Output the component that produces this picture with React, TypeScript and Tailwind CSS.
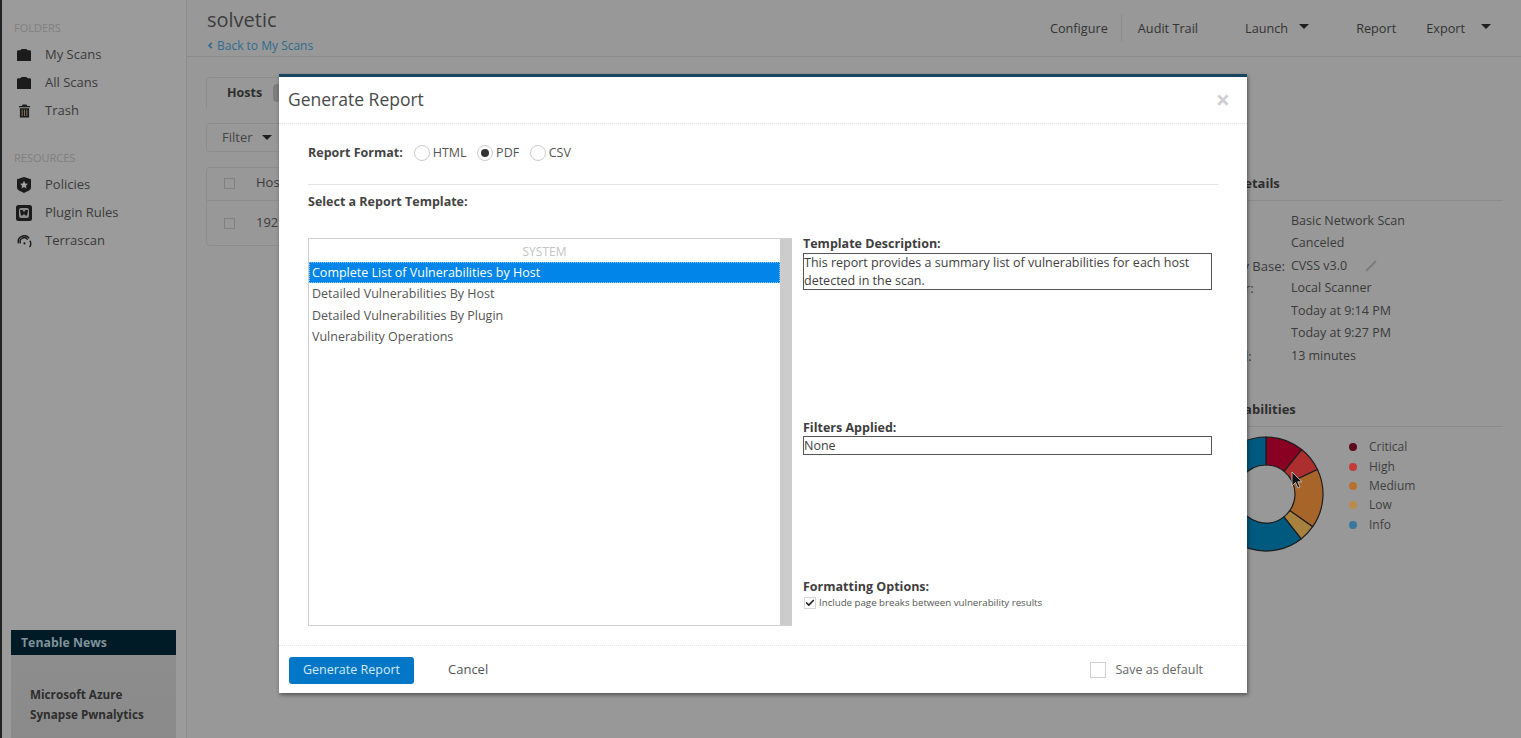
import { Check } from 'lucide-react'

const font = { fontFamily: '"Open Sans", sans-serif' }

const Folder = () => (
  <svg viewBox="0 0 14 12" className="h-[12px] w-[14px]" fill="#1b1b1b">
    <path d="M0 2 L1 1.2 H3.5 L4.5 0 H9.5 L10.5 1.2 H13 L14 2 V12 H0 Z" />
  </svg>
)

const Trash = () => (
  <svg viewBox="0 0 12 14" className="h-[14px] w-[11px]">
    <path fill="#1b1b1b" d="M4 0 H8 L9 1.5 H12 V3 H0 V1.5 H3 Z M1 4 H11 V14 H1 Z" />
    <path stroke="#8a7a62" strokeWidth="1" d="M3.5 5.5 V12.5 M6 5.5 V12.5 M8.5 5.5 V12.5" />
  </svg>
)

const Shield = () => (
  <svg viewBox="0 0 14 16" className="h-[16px] w-[14px]">
    <path fill="#1b1b1b" d="M7 0 L14 2.2 V10.5 Q14 12.5 12 13.5 L7 16 L2 13.5 Q0 12.5 0 10.5 V2.2 Z" />
    <path fill="#a5a5a5" d="M7 3.8 L8.2 6.5 L11 6.8 L8.9 8.7 L9.5 11.5 L7 10 L4.5 11.5 L5.1 8.7 L3 6.8 L5.8 6.5 Z" />
  </svg>
)

const PluginRules = () => (
  <svg viewBox="0 0 16 16" className="h-[16px] w-[16px]">
    <rect width="16" height="16" rx="2.5" fill="#1b1b1b" />
    <rect x="3" y="3" width="10" height="10" rx="2" fill="#8c8c8c" />
    <path fill="#1b1b1b" d="M4 5 H6.3 L8 7 L9.7 5 H12 L11 10.5 H9.6 L8 9 L6.4 10.5 H5 Z" />
  </svg>
)

const Terrascan = () => (
  <svg viewBox="0 0 16 14" className="h-[13px] w-[15px]" fill="none" stroke="#1b1b1b">
    <path strokeWidth="1.5" d="M1.5 9 A6.5 6.5 0 0 1 13 3.5" />
    <path strokeWidth="1.5" d="M3.7 9 A4.3 4.3 0 0 1 11.3 5" />
    <path strokeWidth="1.5" d="M13.8 6 A6.5 6.5 0 0 1 13.5 13" />
    <circle cx="8" cy="9" r="1.2" fill="#1b1b1b" stroke="none" />
  </svg>
)

const Caret = ({ className = '' }: { className?: string }) => (
  <span className={`inline-block h-0 w-0 border-x-[5px] border-t-[5px] border-x-transparent border-t-[#1f1f1f] ${className}`} />
)

function SideItem({ icon, label }: { icon: React.ReactNode; label: string }) {
  return (
    <div className="flex h-[28px] items-center text-[13px] text-[#3a3a3a]">
      <span className="flex w-[20px] justify-center">{icon}</span>
      <span className="ml-[11px]">{label}</span>
    </div>
  )
}

function Sidebar() {
  return (
    <aside className="flex h-full w-[187px] shrink-0 flex-col border-r border-l-2 border-r-[#8c8c8c] border-l-[#222] bg-[#9b9b9b]">
      <div className="pl-[12px] pt-[20px]">
        <div className="mb-[6px] h-[15px] text-[11px] leading-[15px] text-[#808080]">FOLDERS</div>
        <SideItem icon={<Folder />} label="My Scans" />
        <SideItem icon={<Folder />} label="All Scans" />
        <SideItem icon={<Trash />} label="Trash" />
        <div className="mb-[6px] mt-[25px] h-[15px] text-[11px] leading-[15px] text-[#808080]">RESOURCES</div>
        <SideItem icon={<Shield />} label="Policies" />
        <SideItem icon={<PluginRules />} label="Plugin Rules" />
        <SideItem icon={<Terrascan />} label="Terrascan" />
      </div>
      <div className="mx-[9px] mt-auto h-[108px] w-[165px] bg-gradient-to-b from-[#8e8e8e] to-[#8a8a8a]">
        <div className="flex h-[25px] items-center bg-[#001a26] pl-[10px] pt-[1px] text-[12.3px] font-bold text-[#7f9299]">Tenable News</div>
        <div className="pl-[19px] pt-[29px] text-[11.7px] font-bold leading-[20px] text-[#2e2e2e]">
          <div>Microsoft Azure</div>
          <div>Synapse Pwnalytics</div>
        </div>
      </div>
    </aside>
  )
}

function TopBar() {
  return (
    <header className="flex h-[57px] items-stretch justify-between border-b border-[#8a8a8a] pl-[20px]">
      <div className="pt-[6px]">
        <div className="text-[20px] leading-[27px] text-[#3d3d3d]">solvetic</div>
        <div className="mt-[4px] flex items-center text-[12px] leading-[17px] text-[#2f6b8e]">
          <svg viewBox="0 0 6 8" className="mr-[4px] h-[7px] w-[6px]" fill="none" stroke="#2f6b8e" strokeWidth="2">
            <path d="M5 1 L2 4 L5 7" />
          </svg>
          Back to My Scans
        </div>
      </div>
      <nav className="flex pt-[14px] text-[12.7px] leading-[28px] text-[#333]">
        <span className="h-[28px] border-r border-[#8c8c8c] pr-[13px]">Configure</span>
        <span className="ml-[16px]">Audit Trail</span>
        <span className="ml-[47px]">Launch</span>
        <Caret className="ml-[11px] mt-[10px]" />
        <span className="ml-[47px]">Report</span>
        <span className="ml-[30px]">Export</span>
        <Caret className="ml-[16px] mr-[30px] mt-[10px]" />
      </nav>
    </header>
  )
}

function Behind() {
  return (
    <div className="min-w-0 flex-1 pr-[20px] text-[13px] text-[#3a3a3a]">
      <div className="flex h-[31px] items-end">
        <div className="flex h-[31px] w-[100px] items-center rounded-t border-x border-t border-[#8c8c8c] pl-[20px] text-[12.5px] font-bold text-[#2e2e2e]">
          Hosts
          <span className="ml-[11px] h-[18px] w-[12px] rounded-sm bg-[#7e7e7e]" />
        </div>
      </div>
      <div className="mt-[15px] flex h-[29px] w-[110px] items-center rounded-sm border border-[#8c8c8c] pl-[15px] text-[#444]">
        Filter <Caret className="ml-[9px]" />
      </div>
      <div className="mt-[15px] rounded-sm border border-[#8c8c8c]">
        <div className="flex h-[33px] items-center border-b border-[#8c8c8c] pb-[2px] pl-[17px]">
          <span className="h-[11px] w-[11px] border border-[#828282]" />
          <span className="ml-[21px]">Host</span>
        </div>
        <div className="flex h-[44px] items-center pl-[17px]">
          <span className="h-[11px] w-[11px] border border-[#828282]" />
          <span className="ml-[21px]">192.168.0.1</span>
        </div>
      </div>
    </div>
  )
}

const details = [
  ['Policy:', 'Basic Network Scan'],
  ['Status:', 'Canceled'],
  ['Severity Base:', 'CVSS v3.0'],
  ['Scanner:', 'Local Scanner'],
  ['Start:', 'Today at 9:14 PM'],
  ['End:', 'Today at 9:27 PM'],
  ['Elapsed:', '13 minutes'],
]

const severities = [
  { label: 'Critical', dot: '#5c0a1c' },
  { label: 'High', dot: '#c23a3a' },
  { label: 'Medium', dot: '#b9702f' },
  { label: 'Low', dot: '#b98c4a' },
  { label: 'Info', dot: '#3a779c' },
]

const slices = [
  { from: 0, to: 38.7, color: '#8a0022' },
  { from: 38.7, to: 64.5, color: '#ad2e2e' },
  { from: 64.5, to: 125, color: '#a8652a' },
  { from: 125, to: 142, color: '#a8813f' },
  { from: 142, to: 360, color: '#00597f' },
]

function slicePath(from: number, to: number, outer: number, inner: number) {
  const pt = (a: number, r: number) => {
    const t = (a * Math.PI) / 180
    return `${(60 + r * Math.sin(t)).toFixed(2)} ${(60 - r * Math.cos(t)).toFixed(2)}`
  }
  const large = to - from > 180 ? 1 : 0
  return `M${pt(from, outer)} A${outer} ${outer} 0 ${large} 1 ${pt(to, outer)} L${pt(to, inner)} A${inner} ${inner} 0 ${large} 0 ${pt(from, inner)} Z`
}

function Donut() {
  return (
    <svg viewBox="0 0 120 120" className="h-[120px] w-[120px]">
      {slices.map((s) => (
        <path key={s.from} d={slicePath(s.from, s.to, 57, 29)} fill={s.color} stroke="#1d1d1d" strokeWidth="1.2" />
      ))}
    </svg>
  )
}

function ScanDetails() {
  return (
    <div className="w-[302px] shrink-0 text-[12.5px] text-[#3a3a3a]">
      <div className="mt-[97px] flex h-[27px] items-start border-b border-[#8a8a8a] text-[13px] font-bold leading-[18px] text-[#2e2e2e]">Scan Details</div>
      <div className="mt-[9px]">
        {details.map(([k, v]) => (
          <div key={k} className="flex h-[22.5px] items-center">
            <span className="w-[90px] whitespace-nowrap text-[13px]">{k}</span>
            <span>{v}</span>
            {k === 'Severity Base:' && (
              <svg viewBox="0 0 12 12" className="ml-[18px] h-[12px] w-[12px]" stroke="#7c7c7c" strokeWidth="2">
                <path d="M1 11 L11 1" />
              </svg>
            )}
          </div>
        ))}
      </div>
      <div className="mt-[32px] flex h-[27px] items-start border-b border-[#8a8a8a] text-[13px] font-bold leading-[18px] text-[#2e2e2e]">Vulnerabilities</div>
      <div className="relative mt-[8px] flex">
        <div className="ml-[5px] mt-[-1px]">
          <Donut />
        </div>
        <div className="ml-[23px] mt-[3px]">
          {severities.map((s) => (
            <div key={s.label} className="flex h-[19.4px] items-center text-[12px] text-[#3f3f3f]">
              <span className="mr-[12px] h-[8px] w-[8px] rounded-full" style={{ backgroundColor: s.dot }} />
              {s.label}
            </div>
          ))}
        </div>
      </div>
    </div>
  )
}

function Radio({ label, checked }: { label: string; checked?: boolean }) {
  return (
    <label className="flex items-center text-[12.5px] text-[#555]">
      <span className="flex h-[16px] w-[16px] items-center justify-center rounded-full border border-[#ccc] bg-white">
        {checked && <span className="h-[8px] w-[8px] rounded-full bg-[#333]" />}
      </span>
      <span className="ml-[3px]">{label}</span>
    </label>
  )
}

const templates = ['Detailed Vulnerabilities By Host', 'Detailed Vulnerabilities By Plugin', 'Vulnerability Operations']

function GenerateReportModal() {
  return (
    <div className="absolute left-[279px] top-[74px] flex h-[619px] w-[968px] flex-col border-t-[3px] border-[#1a4560] bg-white shadow-[1px_2px_4px_rgba(0,0,0,0.45)]">
      <div className="flex h-[47px] shrink-0 items-center justify-between border-b border-dotted border-[#e4e4e4] pb-[2px] pl-[9px] pr-[17px]">
        <span className="text-[17.5px] text-[#4a4a4a]">Generate Report</span>
        <span className="text-[25px] font-bold leading-none text-[#cfcfcf]">×</span>
      </div>
      <div className="flex min-h-0 flex-1 flex-col pl-[29px] pr-[29px]">
        <div className="flex h-[61px] shrink-0 items-center gap-[10.5px] border-b border-[#e3e3e3] pb-[2px]">
          <span className="mr-[0.5px] text-[12.5px] font-bold text-[#444]">Report Format:</span>
          <Radio label="HTML" />
          <Radio checked label="PDF" />
          <Radio label="CSV" />
        </div>
        <div className="mt-[8px] h-[17px] text-[12.5px] font-bold leading-[17px] text-[#444]">Select a Report Template:</div>
        <div className="mt-[28px] flex h-[388px] gap-[11px]">
          <div className="flex w-[484px] shrink-0 border border-r-0 border-[#cfcfcf]">
            <div className="min-w-0 flex-1 text-[12.5px] text-[#555]">
              <div className="flex h-[23px] items-center justify-center pt-[2px] text-[12px] text-[#c4c4c4]">SYSTEM</div>
              <div className="flex h-[21px] items-center border border-dotted border-[#8ec8f5] bg-[#0285e8] pl-[2px] pt-[1px] text-white">Complete List of Vulnerabilities by Host</div>
              <div className="h-[1px]" />
              {templates.map((t) => (
                <div key={t} className="flex h-[21.3px] items-center pl-[3px]">{t}</div>
              ))}
            </div>
            <div className="w-[12px] shrink-0 bg-[#cccccc]" />
          </div>
          <div className="w-[409px] shrink-0 text-[12.5px] text-[#3e3e3e]">
            <div className="h-[15px] font-bold leading-[11px]">Template Description:</div>
            <div className="h-[37px] border border-[#555] leading-[18px]">
              This report provides a summary list of vulnerabilities for each host detected in the scan.
            </div>
            <div className="mt-[130px] h-[16px] font-bold leading-[15px]">Filters Applied:</div>
            <div className="h-[19px] border border-[#555] leading-[17px]">None</div>
            <div className="mt-[124px] h-[15px] font-bold leading-[15px]">Formatting Options:</div>
            <div className="mt-[2px] flex items-center text-[9.7px] text-[#555]">
              <span className="ml-[1px] flex h-[12px] w-[12px] items-center justify-center border border-[#d6d6d6]">
                <Check className="h-[10px] w-[10px] text-[#222]" strokeWidth={4} />
              </span>
              <span className="ml-[3px]">Include page breaks between vulnerability results</span>
            </div>
          </div>
        </div>
      </div>
      <div className="flex h-[48px] shrink-0 items-center justify-between border-t border-dotted border-[#e6e6e6] pl-[10px] pr-[44px] pt-[1px] text-[12.5px] text-[#666]">
        <div className="flex items-center">
          <button className="h-[27px] w-[125px] rounded-[3px] bg-[#0277c8] text-[12.5px] text-[#d5e9f7]">Generate Report</button>
          <span className="ml-[34px] text-[13px] text-[#555]">Cancel</span>
        </div>
        <label className="flex items-center">
          <span className="h-[16px] w-[16px] border border-[#d0d0d0]" />
          <span className="ml-[9px]">Save as default</span>
        </label>
      </div>
    </div>
  )
}

export default function App() {
  return (
    <div className="relative flex h-screen overflow-hidden bg-[#989898]" style={font}>
      <Sidebar />
      <main className="min-w-0 flex-1">
        <TopBar />
        <div className="flex pl-[19px] pr-[18px] pt-[20px]">
          <Behind />
          <ScanDetails />
        </div>
      </main>
      <GenerateReportModal />
      <svg viewBox="0 0 12 18" className="absolute left-[1291px] top-[471px] h-[18px] w-[12px]">
        <path d="M1 1 V15 L4.5 11.5 L7 17 L9 16 L6.7 10.8 H11 Z" fill="#111" stroke="#d0d0d0" strokeWidth="0.8" />
      </svg>
    </div>
  )
}
